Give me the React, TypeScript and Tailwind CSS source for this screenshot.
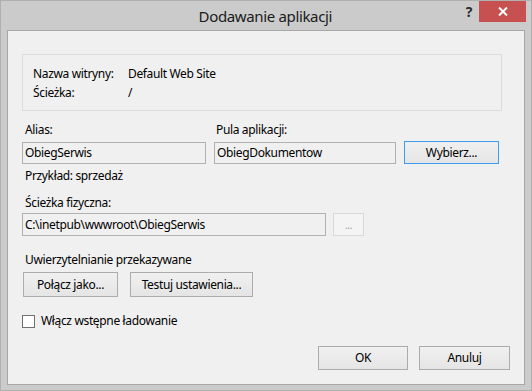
import React from "react";

const btnBase =
  "flex items-center justify-center border bg-gradient-to-b from-[#f0f0f0] to-[#e5e5e5] text-[12px] text-black";
const btn = `${btnBase} border-[#acacac]`;

export default function App() {
  return (
    <div
      className="w-[532px] h-[391px] flex flex-col bg-[#cbcbcb] border border-[#b0b0b0] text-black tracking-[-0.35px]"
      style={{ fontFamily: '"Segoe UI", "Noto Sans", "Open Sans", sans-serif' }}
    >
      {/* Title bar */}
      <div className="h-[29px] flex items-start shrink-0">
        <div className="flex-1 pl-[64px] text-center text-[15px] leading-[30px] text-[#1a1a1a]">
          Dodawanie aplikacji
        </div>
        <div className="flex items-start pr-[5px]">
          <span className="mt-[3px] mr-[7px] text-[14px] font-bold leading-[16px] text-[#2b2b2b]">?</span>
          <div className="w-[47px] h-[21px] bg-[#c75050] flex items-center justify-center">
            <svg width="10" height="9" viewBox="0 0 10 9">
              <path d="M1 0.5 L9 8.5 M9 0.5 L1 8.5" stroke="#fff" strokeWidth="2" />
            </svg>
          </div>
        </div>
      </div>

      {/* Content */}
      <div className="mx-[6px] mb-[5px] flex-1 flex flex-col border border-[#a7a7a7] bg-[#f0f0f0] pl-[14px] pt-[23px] text-[12px] leading-[16px]">
        {/* Site info */}
        <div className="w-[480px] h-[57px] border border-[#dcdcdc] pl-[10px] pt-[9px]">
          <div className="flex leading-[19px]">
            <span className="w-[95px]">Nazwa witryny:</span>
            <span>Default Web Site</span>
          </div>
          <div className="flex leading-[19px]">
            <span className="w-[95px]">Ścieżka:</span>
            <span>/</span>
          </div>
        </div>

        {/* Alias / pool */}
        <div className="mt-[11px] flex items-end gap-[8px]">
          <div className="w-[184px] flex flex-col">
            <span className="pl-[3px]">Alias:</span>
            <div className="mt-[4px] h-[22px] border border-[#b1b1b1] bg-[#f0f0f0] pl-[2px] leading-[20px]">
              ObiegSerwis
            </div>
          </div>
          <div className="w-[182px] flex flex-col">
            <span className="pl-[2px]">Pula aplikacji:</span>
            <div className="mt-[4px] h-[22px] border border-[#b1b1b1] bg-[#f0f0f0] pl-[2px] leading-[20px]">
              ObiegDokumentow
            </div>
          </div>
          <div className={`${btnBase} border-[#3c9cf0] w-[95px] h-[23px]`}>Wybierz...</div>
        </div>
        <span className="mt-[4px] pl-[3px]">Przykład: sprzedaż</span>

        {/* Physical path */}
        <span className="mt-[11px] pl-[3px]">Ścieżka fizyczna:</span>
        <div className="mt-[2px] flex gap-[7px]">
          <div className="w-[304px] h-[23px] border border-[#b1b1b1] bg-[#f0f0f0] pl-[2px] leading-[21px]">
            C:\inetpub\wwwroot\ObiegSerwis
          </div>
          <div className="w-[31px] h-[23px] flex items-center justify-center border border-[#d9d9d9] bg-[#f4f4f4] text-[10px] text-[#9a9a9a]">
            ...
          </div>
        </div>

        {/* Pass-through auth */}
        <span className="mt-[16px] pl-[3px]">Uwierzytelnianie przekazywane</span>
        <div className="mt-[4px] flex gap-[12px] pl-[1px]">
          <div className={`${btn} w-[95px] h-[25px]`}>Połącz jako...</div>
          <div className={`${btn} w-[123px] h-[25px]`}>Testuj ustawienia...</div>
        </div>

        {/* Preload */}
        <label className="mt-[16px] flex items-center gap-[6px]">
          <span className="w-[13px] h-[13px] border border-[#707070] bg-white" />
          <span>Włącz wstępne ładowanie</span>
        </label>

        {/* Footer */}
        <div className="mt-auto mb-[14px] mr-[14px] flex justify-end gap-[11px]">
          <div className={`${btn} w-[90px] h-[24px]`}>OK</div>
          <div className={`${btn} w-[91px] h-[24px]`}>Anuluj</div>
        </div>
      </div>
    </div>
  );
}
